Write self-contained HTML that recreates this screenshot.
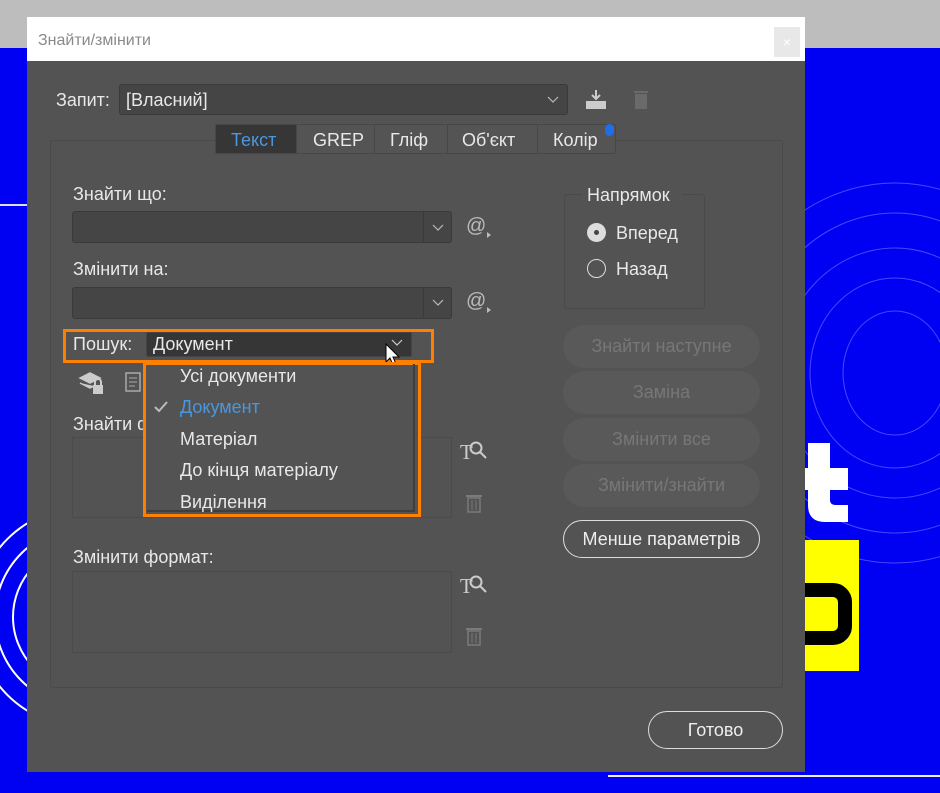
<!DOCTYPE html>
<html><head><meta charset="utf-8"><style>
*{margin:0;padding:0;box-sizing:border-box}
body{width:940px;height:793px;position:relative;overflow:hidden;background:#0000f2;font-family:"Liberation Sans","DejaVu Sans",sans-serif;color:#e8e8e8}
.a{position:absolute}
.t{position:absolute;font-size:18px;line-height:20px;white-space:nowrap}
.inp{position:absolute;background:#454545;border:1px solid #3a3a3a;border-radius:3px}
.btn{position:absolute;border-radius:22px;background:#595959;color:#777;font-size:18px;text-align:center;line-height:43px;width:197px;height:43px;left:563px}
</style></head><body>
<div class="a" style="left:0;top:0;width:940px;height:48px;background:#bdbdbd"></div>
<div class="a" style="left:0;top:204px;width:30px;height:2px;background:#ddd"></div>
<div class="a" style="left:608px;top:775px;width:332px;height:2px;background:#eee"></div>
<svg class="a" style="left:0;top:0" width="940" height="793">
<g fill="none" stroke="#fff" stroke-width="2">
<circle cx="85" cy="617" r="35"/><circle cx="85" cy="617" r="55"/><circle cx="85" cy="617" r="72"/><circle cx="85" cy="617" r="90"/><circle cx="85" cy="617" r="110"/>
</g>
<g fill="none" stroke="#4848ff" stroke-width="1">
<ellipse cx="895" cy="373" rx="52" ry="62"/><ellipse cx="895" cy="373" rx="85" ry="95"/><ellipse cx="895" cy="373" rx="115" ry="125"/><ellipse cx="895" cy="373" rx="145" ry="160"/><ellipse cx="895" cy="373" rx="175" ry="190"/>
</g>
<rect x="805" y="540" width="54" height="131" fill="#ffff00"/>
<rect x="790" y="590" width="55" height="48" rx="12" fill="none" stroke="#000" stroke-width="14"/>
<path d="M805 468 H848 V490 H830 V500 Q830 505 836 505 H848 V522 H825 Q808 522 808 505 V490 H805 V468 Z M808 443 H830 V468 H808 Z" fill="#fff"/>
</svg>
<!-- dialog -->
<div class="a" style="left:27px;top:17px;width:778px;height:44px;background:#fff"></div>
<div class="t" style="left:38px;top:31px;font-size:16px;color:#8a8a8a">Знайти/змінити</div>
<div class="a" style="left:774px;top:27px;width:26px;height:30px;background:#e8e8e8;color:#fff;font-size:14px;text-align:center;line-height:30px">×</div>
<div class="a" style="left:27px;top:61px;width:778px;height:711px;background:#535353"></div>
<div class="t" style="left:56px;top:90px">Запит:</div>
<div class="inp" style="left:119px;top:84px;width:449px;height:31px"></div>
<div class="t" style="left:126px;top:90px">[Власний]</div>
<svg class="a" style="left:546px;top:94px" width="14" height="10"><path d="M2 3 L7 8 L12 3" fill="none" stroke="#bbb" stroke-width="1.2"/></svg>
<svg class="a" style="left:584px;top:88px" width="24" height="24"><path d="M12 2 V11 M8 7 L12 11 L16 7" stroke="#ccc" stroke-width="2" fill="none"/><rect x="2" y="13" width="20" height="8" fill="#ccc"/></svg>
<svg class="a" style="left:632px;top:88px" width="18" height="22"><rect x="2" y="3" width="14" height="2" fill="#6a6a6a"/><rect x="3" y="6" width="12" height="15" fill="#6a6a6a"/></svg>
<div class="a" style="left:50px;top:140px;width:733px;height:548px;border:1px solid #4a4a4a;border-radius:3px"></div>
<div class="a" style="left:215px;top:124px;width:401px;height:30px;background:#545454;border:1px solid #474747;border-radius:2px"></div>
<div class="a" style="left:216px;top:125px;width:80px;height:28px;background:#363636"></div>
<div class="t" style="left:231px;top:130px;color:#4a97e0">Текст</div>
<div class="a" style="left:296px;top:125px;width:1px;height:28px;background:#474747"></div>
<div class="t" style="left:313px;top:130px">GREP</div>
<div class="a" style="left:374px;top:125px;width:1px;height:28px;background:#474747"></div>
<div class="t" style="left:390px;top:130px">Гліф</div>
<div class="a" style="left:447px;top:125px;width:1px;height:28px;background:#474747"></div>
<div class="t" style="left:462px;top:130px">Об'єкт</div>
<div class="a" style="left:537px;top:125px;width:1px;height:28px;background:#474747"></div>
<div class="t" style="left:553px;top:130px">Колір</div>
<div class="a" style="left:605px;top:124px;width:9px;height:12px;border-radius:5px;background:#1e6ee8"></div>

<div class="t" style="left:73px;top:184px">Знайти що:</div>
<div class="inp" style="left:72px;top:211px;width:380px;height:32px"></div>
<div class="a" style="left:423px;top:212px;width:1px;height:30px;background:#3a3a3a"></div>
<svg class="a" style="left:431px;top:223px" width="14" height="10"><path d="M2 2 L7 7 L12 2" fill="none" stroke="#bbb" stroke-width="1.2"/></svg>
<div class="t" style="left:466px;top:216px;font-size:20px;color:#bbb">@</div><div class="a" style="left:487px;top:232px;width:0;height:0;border-left:4px solid #bbb;border-top:3px solid transparent;border-bottom:3px solid transparent"></div>
<div class="t" style="left:73px;top:259px">Змінити на:</div>
<div class="inp" style="left:72px;top:287px;width:380px;height:32px"></div>
<div class="a" style="left:423px;top:288px;width:1px;height:30px;background:#3a3a3a"></div>
<svg class="a" style="left:431px;top:298px" width="14" height="10"><path d="M2 2 L7 7 L12 2" fill="none" stroke="#bbb" stroke-width="1.2"/></svg>
<div class="t" style="left:466px;top:291px;font-size:20px;color:#bbb">@</div><div class="a" style="left:487px;top:307px;width:0;height:0;border-left:4px solid #bbb;border-top:3px solid transparent;border-bottom:3px solid transparent"></div>

<svg class="a" style="left:78px;top:370px" width="30" height="26"><path d="M2 8 L12 3 L22 8 L12 13 Z M2 13 L12 18 L16 16" fill="#ccc" stroke="#ccc" stroke-width="1.5"/><rect x="15" y="15" width="10" height="9" fill="#ccc"/><path d="M17 15 V12 A3 3 0 0 1 23 12 V15" fill="none" stroke="#ccc" stroke-width="2"/></svg>
<svg class="a" style="left:125px;top:372px" width="18" height="22"><rect x="1" y="1" width="14" height="18" fill="none" stroke="#aaa" stroke-width="1.5"/><path d="M4 6 H12 M4 10 H12 M4 14 H10" stroke="#aaa"/></svg>
<div class="t" style="left:73px;top:414px">Знайти формат:</div>
<div class="a" style="left:72px;top:437px;width:380px;height:81px;border:1px solid #4b4b4b"></div>
<div class="t" style="left:73px;top:547px">Змінити формат:</div>
<div class="a" style="left:72px;top:571px;width:380px;height:82px;border:1px solid #4b4b4b"></div>
<div class="t" style="left:460px;top:442px;font-size:21px;font-family:'Liberation Serif',serif;color:#ccc">T</div><svg class="a" style="left:467px;top:440px" width="22" height="20"><circle cx="9" cy="8" r="5.5" fill="none" stroke="#ccc" stroke-width="2"/><path d="M13 12 L19 18" stroke="#ccc" stroke-width="2"/></svg>
<div class="t" style="left:460px;top:576px;font-size:21px;font-family:'Liberation Serif',serif;color:#ccc">T</div><svg class="a" style="left:467px;top:574px" width="22" height="20"><circle cx="9" cy="8" r="5.5" fill="none" stroke="#ccc" stroke-width="2"/><path d="M13 12 L19 18" stroke="#ccc" stroke-width="2"/></svg>
<svg class="a" style="left:465px;top:493px" width="18" height="20"><rect x="1" y="2" width="16" height="2" fill="#7a7a7a"/><rect x="3" y="5" width="12" height="14" fill="none" stroke="#7a7a7a" stroke-width="1.5"/><path d="M7 7 V17 M11 7 V17" stroke="#7a7a7a"/></svg>
<svg class="a" style="left:465px;top:626px" width="18" height="20"><rect x="1" y="2" width="16" height="2" fill="#7a7a7a"/><rect x="3" y="5" width="12" height="14" fill="none" stroke="#7a7a7a" stroke-width="1.5"/><path d="M7 7 V17 M11 7 V17" stroke="#7a7a7a"/></svg>

<!-- search row -->
<div class="a" style="left:63px;top:329px;width:371px;height:34px;border:3px solid #ff8000"></div>
<div class="t" style="left:73px;top:334px">Пошук:</div>
<div class="a" style="left:146px;top:332px;width:266px;height:25px;background:#363636;border:1px solid #444;border-radius:2px"></div>
<div class="t" style="left:153px;top:334px">Документ</div>
<svg class="a" style="left:390px;top:338px" width="14" height="10"><path d="M2 2 L7 7 L12 2" fill="none" stroke="#ccc" stroke-width="1.2"/></svg>
<svg class="a" style="left:385px;top:343px" width="16" height="24"><path d="M1 1 V19 L5 15 L8 22 L11 21 L8 14 L14 14 Z" fill="#fff" stroke="#000" stroke-width="1"/></svg>
<div class="a" style="left:143px;top:362px;width:278px;height:155px;background:#535353;border:3px solid #ff8000"></div>
<div class="a" style="left:147px;top:364px;width:268px;height:148px;border-right:2px solid #3e3e3e;border-bottom:2px solid #3e3e3e"></div>
<div class="t" style="left:180px;top:366px">Усі документи</div>
<svg class="a" style="left:153px;top:400px" width="16" height="14"><path d="M2 7 L6 11 L14 2" fill="none" stroke="#bbb" stroke-width="2"/></svg>
<div class="t" style="left:180px;top:397px;color:#4a97e0">Документ</div>
<div class="t" style="left:180px;top:429px">Матеріал</div>
<div class="t" style="left:180px;top:460px">До кінця матеріалу</div>
<div class="t" style="left:180px;top:492px">Виділення</div>

<!-- right -->
<div class="a" style="left:564px;top:194px;width:141px;height:115px;border:1px solid #4a4a4a;border-radius:3px"></div>
<div class="a" style="left:582px;top:186px;width:100px;height:18px;background:#535353"></div>
<div class="t" style="left:587px;top:185px">Напрямок</div>
<div class="a" style="left:587px;top:223px;width:19px;height:19px;border-radius:50%;background:#ddd"></div>
<div class="a" style="left:594px;top:230px;width:5px;height:5px;border-radius:50%;background:#444"></div>
<div class="t" style="left:616px;top:223px">Вперед</div>
<div class="a" style="left:587px;top:259px;width:19px;height:19px;border-radius:50%;border:1.5px solid #ddd"></div>
<div class="t" style="left:616px;top:259px">Назад</div>
<div class="btn" style="top:325px">Знайти наступне</div>
<div class="btn" style="top:371px">Заміна</div>
<div class="btn" style="top:418px">Змінити все</div>
<div class="btn" style="top:464px">Змінити/знайти</div>
<div class="btn" style="top:520px;height:38px;line-height:36px;background:transparent;border:1px solid #ddd;color:#eee">Менше параметрів</div>
<div class="a" style="left:648px;top:711px;width:135px;height:38px;border:1px solid #ddd;border-radius:20px;text-align:center;line-height:36px;font-size:18px;color:#eee">Готово</div>
</body></html>
